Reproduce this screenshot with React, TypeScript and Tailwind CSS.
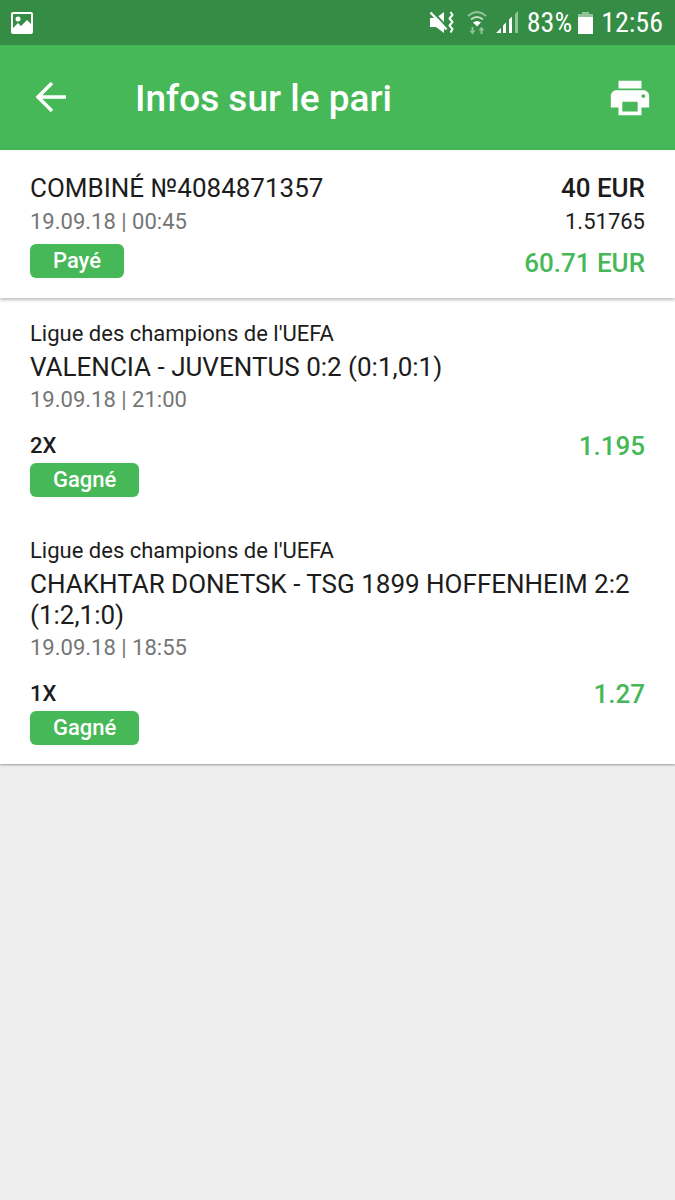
import type { ReactNode } from "react";

/* ================= Data ================= */

const bets = [
  {
    league: "Ligue des champions de l'UEFA",
    match: "VALENCIA - JUVENTUS 0:2 (0:1,0:1)",
    date: "19.09.18 | 21:00",
    pick: "2X",
    odds: "1.195",
    status: "Gagné",
  },
  {
    league: "Ligue des champions de l'UEFA",
    match: "CHAKHTAR DONETSK - TSG 1899 HOFFENHEIM 2:2 (1:2,1:0)",
    date: "19.09.18 | 18:55",
    pick: "1X",
    odds: "1.27",
    status: "Gagné",
  },
];

/* ================= Status Bar ================= */

function StatusBar() {
  return (
    <div className="flex h-[45px] items-center justify-between bg-[#358c44] pl-[11px] pr-3 text-white">
      <svg width="22" height="22" viewBox="0 0 22 22" aria-hidden="true">
        <rect x="1" y="1" width="20" height="20" rx="1" fill="none" stroke="white" strokeWidth="2" />
        <circle cx="7" cy="7" r="2.5" fill="white" />
        <path d="M2 16l5-5 3 3 6-6 5 5v8H2z" fill="white" />
      </svg>

      <div className="flex items-center">
        {/* muted, vibrating */}
        <svg className="mr-3" width="26" height="24" viewBox="0 0 26 24" aria-hidden="true">
          <path d="M1 7h6l8-6v21l-8-6H1z" fill="white" />
          <path d="M4.500 1.500l13 14" stroke="#358c44" strokeWidth="2" />
          <path d="M1.500 1.500l16 17" stroke="white" strokeWidth="2.500" />
          <path
            d="M21.500 1l2 3-3 3.500 3 3.500-3 3.500 3 3.500-2 3.500"
            fill="none"
            stroke="white"
            strokeWidth="2"
            strokeLinejoin="round"
          />
        </svg>
        {/* wifi with traffic arrows */}
        <svg className="mr-2" width="20" height="24" viewBox="0 0 20 24" fill="none" aria-hidden="true">
          <path d="M1 5q9-8 18 0" stroke="#8fc398" strokeWidth="2" />
          <path d="M4 8.500q6-5 12 0" stroke="#c3dfc8" strokeWidth="2" />
          <path d="M6 11.500q4-3 8 0l-4 4z" fill="white" />
          <path d="M5.500 16v5M14.500 23v-5" stroke="#8fc398" strokeWidth="2" />
          <path d="M2.500 19.500h6l-3 4zM11.500 19.500h6l-3-4z" fill="#8fc398" />
        </svg>
        {/* cell signal */}
        <svg className="mr-2" width="24" height="24" viewBox="0 0 24 24" aria-hidden="true">
          <path d="M1 22l5-5v5zM8 14.500l3-3V22H8zM14 8.500l3-3V22h-3z" fill="white" />
          <path d="M20 3l3-3v22h-3z" fill="#8fc398" />
        </svg>
        <span className="font-['Roboto_Condensed','Liberation_Sans_Narrow',Roboto,sans-serif] text-[28px] leading-8">
          83%
        </span>
        <svg className="ml-1.5 mr-2" width="15" height="24" viewBox="0 0 15 24" aria-hidden="true">
          <path d="M4 1h7v2h4v3H0V3h4z" fill="#8fc398" />
          <path d="M0 6h15v17H0z" fill="white" />
        </svg>
        <span className="font-['Roboto_Condensed','Liberation_Sans_Narrow',Roboto,sans-serif] text-[28px] leading-8">
          12:56
        </span>
      </div>
    </div>
  );
}

/* ================= App Bar ================= */

function AppBar() {
  return (
    <header className="flex h-[105px] items-center bg-[#46b858] pl-[35px] pr-[22px] text-white">
      <button type="button" aria-label="Retour">
        <svg width="32" height="32" viewBox="0 0 32 32" fill="none" aria-hidden="true">
          <path d="M31 15H4M17 1L3 15l14 14" stroke="white" strokeWidth="3.500" />
        </svg>
      </button>
      <h1 className="ml-[68px] flex-1 pt-0.5 text-[37px] font-medium leading-[44px]">
        Infos sur le pari
      </h1>
      <button type="button" aria-label="Imprimer">
        <svg width="46" height="46" viewBox="0 0 24 24" fill="white" aria-hidden="true">
          <path d="M19 8H5c-1.660 0-3 1.340-3 3v6h4v4h12v-4h4v-6c0-1.660-1.340-3-3-3zm-3 11H8v-5h8v5zm3-7c-.550 0-1-.450-1-1s.450-1 1-1 1 .450 1 1-.450 1-1 1zm-1-9H6v4h12V3z" />
        </svg>
      </button>
    </header>
  );
}

/* ================= Badge ================= */

function Badge({ children }: { children: ReactNode }) {
  return (
    <span className="inline-block rounded-md bg-[#46b858] px-[23px] text-[22px] font-medium leading-[34px] text-white">
      {children}
    </span>
  );
}

/* ================= Coupon ================= */

function Coupon() {
  return (
    <section className="relative bg-white px-[30px] pb-5 pt-[23px] shadow-[0_2px_3px_rgba(0,0,0,0.25)]">
      <div className="flex justify-between text-[26px] leading-[31px]">
        <h2>COMBINÉ №4084871357</h2>
        <span className="font-medium">40 EUR</span>
      </div>
      <div className="mt-[5px] flex justify-between text-[22px] leading-[26px]">
        <span className="text-[#757575]">19.09.18 | 00:45</span>
        <span>1.51765</span>
      </div>
      <div className="mt-[9px] flex items-end justify-between">
        <Badge>Payé</Badge>
        <span className="text-[26px] font-medium leading-[30px] text-[#46b858]">
          60.71 EUR
        </span>
      </div>
    </section>
  );
}

/* ================= Bet ================= */

function Bet({ bet }: { bet: (typeof bets)[number] }) {
  return (
    <article>
      <p className="text-[22px] leading-[26px]">{bet.league}</p>
      <h3 className="mt-[5px] text-[26px] leading-[31px]">{bet.match}</h3>
      <p className="mt-1 text-[22px] leading-[26px] text-[#757575]">{bet.date}</p>
      <div className="mt-[18px] flex items-center justify-between font-medium leading-[30px]">
        <span className="text-[22px]">{bet.pick}</span>
        <span className="text-[26px] text-[#46b858]">{bet.odds}</span>
      </div>
      <div className="mt-0.5 flex">
        <Badge>{bet.status}</Badge>
      </div>
    </article>
  );
}

/* ================= Main ================= */

export default function App() {
  return (
    <div className="min-h-screen bg-[#ededed] font-[Roboto,sans-serif] text-[#1c1c1c]">
      <StatusBar />
      <AppBar />
      <main>
        <Coupon />
        <section className="flex flex-col gap-[41px] bg-white px-[30px] pb-[19px] pt-[23px] shadow-[0_1px_2px_rgba(0,0,0,0.35)]">
          {bets.map((bet) => (
            <Bet key={bet.match} bet={bet} />
          ))}
        </section>
      </main>
    </div>
  );
}
